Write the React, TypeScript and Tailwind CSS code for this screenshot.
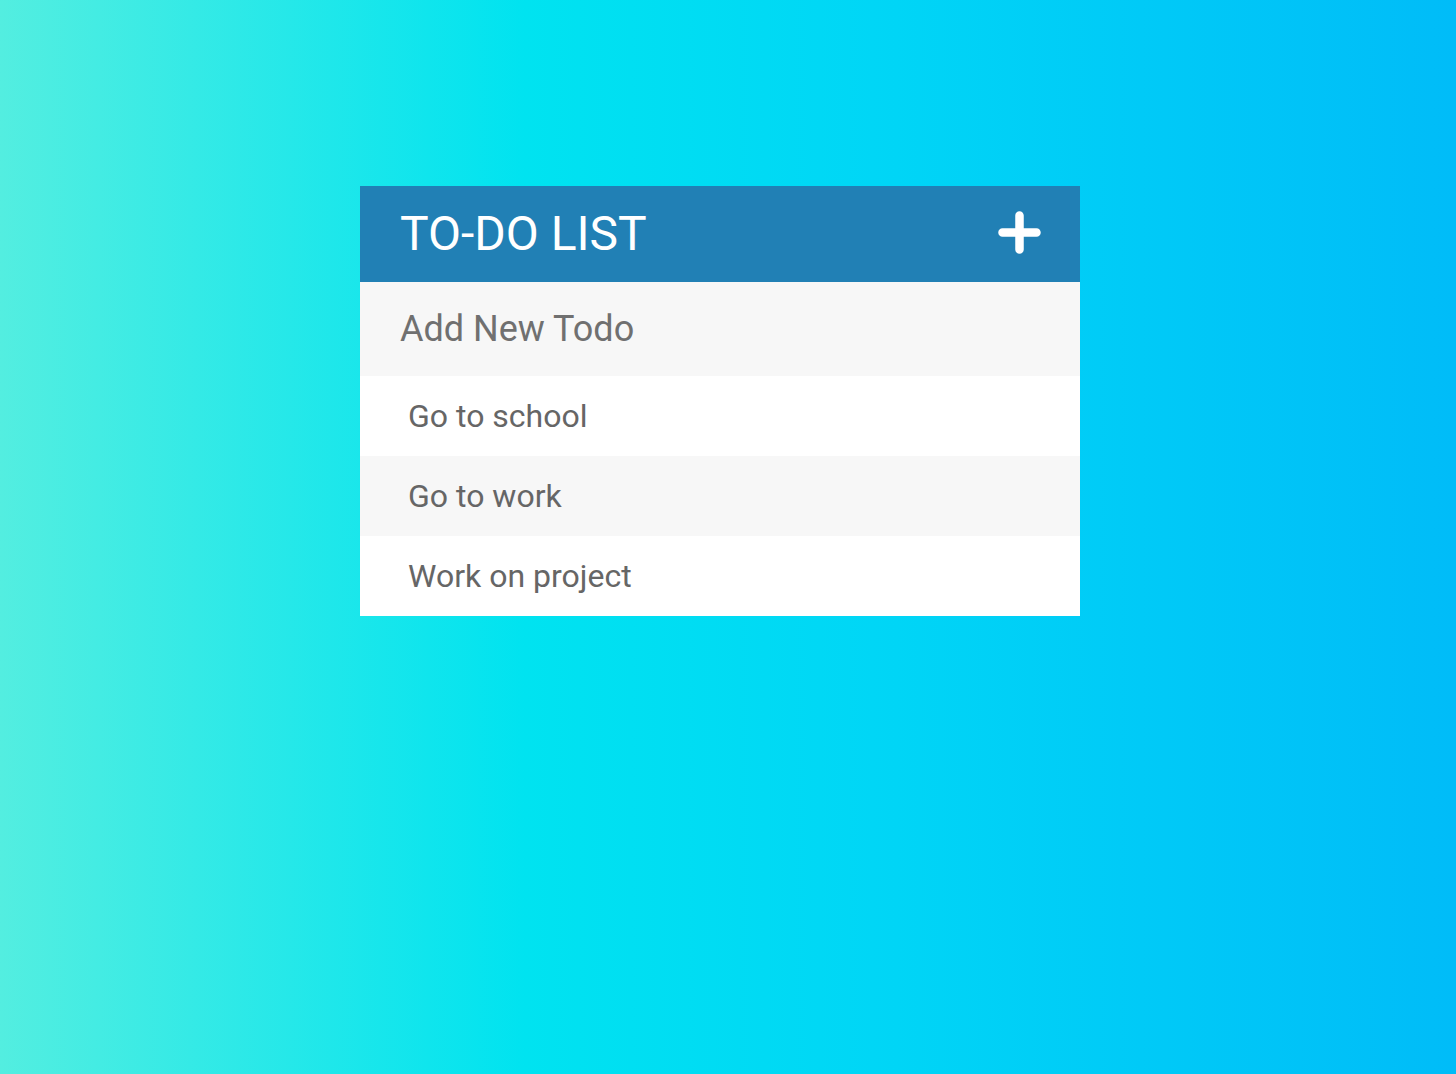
import React from 'react'

const todos = ['Go to school', 'Go to work', 'Work on project']

export default function App() {
  return (
    <div className="w-full min-h-screen bg-[linear-gradient(to_right,#53eee0_0%,#00e3f0_36%,#00d6f6_60%,#00bcf8_100%)] pt-[186px] font-['Roboto',sans-serif]">
      <div className="w-[720px] ml-[360px] bg-white">
        <div className="h-[96px] bg-[#2180b5] flex items-center justify-between pl-[40px] pr-[39px]">
          <h1 className="text-[48px] leading-none text-white">TO-DO LIST</h1>
          <svg width="43" height="43" viewBox="0 0 43 43" className="-mt-[3px]">
            <path d="M21.5 4.5v34M4.5 21.5h34" stroke="white" strokeWidth="8.5" strokeLinecap="round" />
          </svg>
        </div>
        <div className="h-[94px] bg-[#f7f7f7] flex items-center pl-[40px]">
          <input
            className="w-full bg-transparent outline-none text-[36px] text-[#707070] placeholder:text-[#707070]"
            placeholder="Add New Todo"
          />
        </div>
        <ul>
          {todos.map((t, i) => (
            <li
              key={t}
              className={`h-[80px] flex items-center pl-[48px] pb-[1px] text-[32px] text-[#666] ${i % 2 === 1 ? 'bg-[#f7f7f7]' : 'bg-white'}`}
            >
              {t}
            </li>
          ))}
        </ul>
      </div>
    </div>
  )
}
